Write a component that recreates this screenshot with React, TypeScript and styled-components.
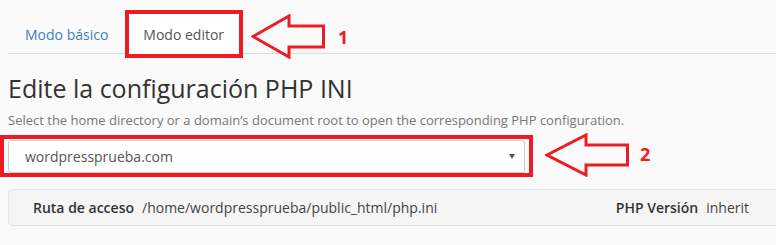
import styled, { createGlobalStyle } from "styled-components";

const GlobalStyle = createGlobalStyle`
  html, body {
    margin: 0;
    padding: 0;
    background: #fafafa;
    overflow: hidden;
  }
  body {
    font-family: "Open Sans", "Liberation Sans", sans-serif;
    color: #333;
  }
`;

const Page = styled.div`
  width: 776px;
  height: 245px;
  overflow: hidden;
`;

const TabBar = styled.div`
  display: flex;
  align-items: flex-start;
  box-sizing: border-box;
  height: 54px;
  margin-left: 8px;
  padding-top: 10px;
  border-bottom: 1px solid #ddd;
`;

const Tab = styled.div<{ $active?: boolean }>`
  display: flex;
  align-items: center;
  box-sizing: border-box;
  height: 48px;
  font-size: 14px;
  white-space: nowrap;
  padding: ${(p) => (p.$active ? "0 15px 0 14px" : "0 17px")};
  color: ${(p) => (p.$active ? "#555" : "#3b80c3")};
  background: ${(p) => (p.$active ? "#fff" : "transparent")};
  border: ${(p) => (p.$active ? "4px solid #ed1c24" : "none")};
`;

const ArrowSvg = styled.svg<{ $top: number; $left: number }>`
  display: block;
  flex: none;
  margin-top: ${(p) => p.$top}px;
  margin-left: ${(p) => p.$left}px;
`;

const Marker = styled.span<{ $top: number; $left: number }>`
  margin-top: ${(p) => p.$top}px;
  margin-left: ${(p) => p.$left}px;
  font-size: 18px;
  line-height: 20px;
  font-weight: 700;
  color: #ed1c24;
`;

const Title = styled.h1`
  margin: 19px 0 0 8px;
  font-size: 25px;
  line-height: 30px;
  font-weight: 400;
  color: #333;
  white-space: nowrap;
`;

const Hint = styled.p`
  margin: 8px 0 0 8px;
  font-size: 13px;
  line-height: 18px;
  color: #777;
  white-space: nowrap;
`;

const SelectRow = styled.div`
  display: flex;
  align-items: flex-start;
  margin-top: 6px;
`;

const Highlight = styled.div`
  box-sizing: border-box;
  width: 533px;
  height: 42px;
  padding: 1px 4px 0;
  border: 4px solid #ed1c24;
`;

const Select = styled.div`
  display: flex;
  align-items: center;
  justify-content: space-between;
  box-sizing: border-box;
  height: 33px;
  padding: 0 9px 0 16px;
  background: #fff;
  border: 1px solid #ccc;
  border-radius: 3px;
  font-size: 14px;
  color: #555;
`;

const Caret = styled.span`
  width: 0;
  height: 0;
  border-left: 3px solid transparent;
  border-right: 3px solid transparent;
  border-top: 5px solid #555;
`;

const InfoPanel = styled.div`
  display: flex;
  align-items: center;
  box-sizing: border-box;
  height: 37px;
  margin: 12px -12px 0 8px;
  padding: 0 38px 0 24px;
  background: #f5f5f5;
  border: 1px solid #e3e3e3;
  border-radius: 4px;
  font-size: 14px;
  white-space: nowrap;
`;

const Field = styled.div<{ $push?: boolean }>`
  display: flex;
  gap: 8px;
  margin-left: ${(p) => (p.$push ? "auto" : "0")};
`;

const Label = styled.span`
  font-weight: 600;
  color: #333;
`;

const Value = styled.span`
  color: #444;
`;

type ArrowProps = {
  w: number;
  h: number;
  head: number;
  shaftTop: number;
  shaftBottom: number;
  top: number;
  left: number;
};

function Arrow({ w, h, head, shaftTop, shaftBottom, top, left }: ArrowProps) {
  const mid = h / 2;
  const right = w - 2.5;
  const pts = [
    [2, mid],
    [head, 2],
    [head, shaftTop],
    [right, shaftTop],
    [right, shaftBottom],
    [head, shaftBottom],
    [head, h - 2],
  ]
    .map((p) => p.join(","))
    .join(" ");
  return (
    <ArrowSvg width={w} height={h} viewBox={`0 0 ${w} ${h}`} $top={top} $left={left}>
      <polygon points={pts} fill="none" stroke="#ed1c24" strokeWidth={3} strokeLinejoin="miter" />
    </ArrowSvg>
  );
}

export default function App() {
  return (
    <Page>
      <GlobalStyle />
      <TabBar>
        <Tab>Modo básico</Tab>
        <Tab $active>Modo editor</Tab>
        <Arrow w={75} h={45} head={38} shaftTop={12} shaftBottom={33} top={4} left={8} />
        <Marker $top={17} $left={12}>1</Marker>
      </TabBar>

      <Title>Edite la configuración PHP INI</Title>
      <Hint>
        Select the home directory or a domain’s document root to open the corresponding PHP
        configuration.
      </Hint>

      <SelectRow>
        <Highlight>
          <Select>
            <span>wordpressprueba.com</span>
            <Caret />
          </Select>
        </Highlight>
        <Arrow w={85} h={44} head={41} shaftTop={12} shaftBottom={32} top={-2} left={12} />
        <Marker $top={9} $left={10}>2</Marker>
      </SelectRow>

      <InfoPanel>
        <Field>
          <Label>Ruta de acceso</Label>
          <Value>/home/wordpressprueba/public_html/php.ini</Value>
        </Field>
        <Field $push>
          <Label>PHP Versión</Label>
          <Value>inherit</Value>
        </Field>
      </InfoPanel>
    </Page>
  );
}
